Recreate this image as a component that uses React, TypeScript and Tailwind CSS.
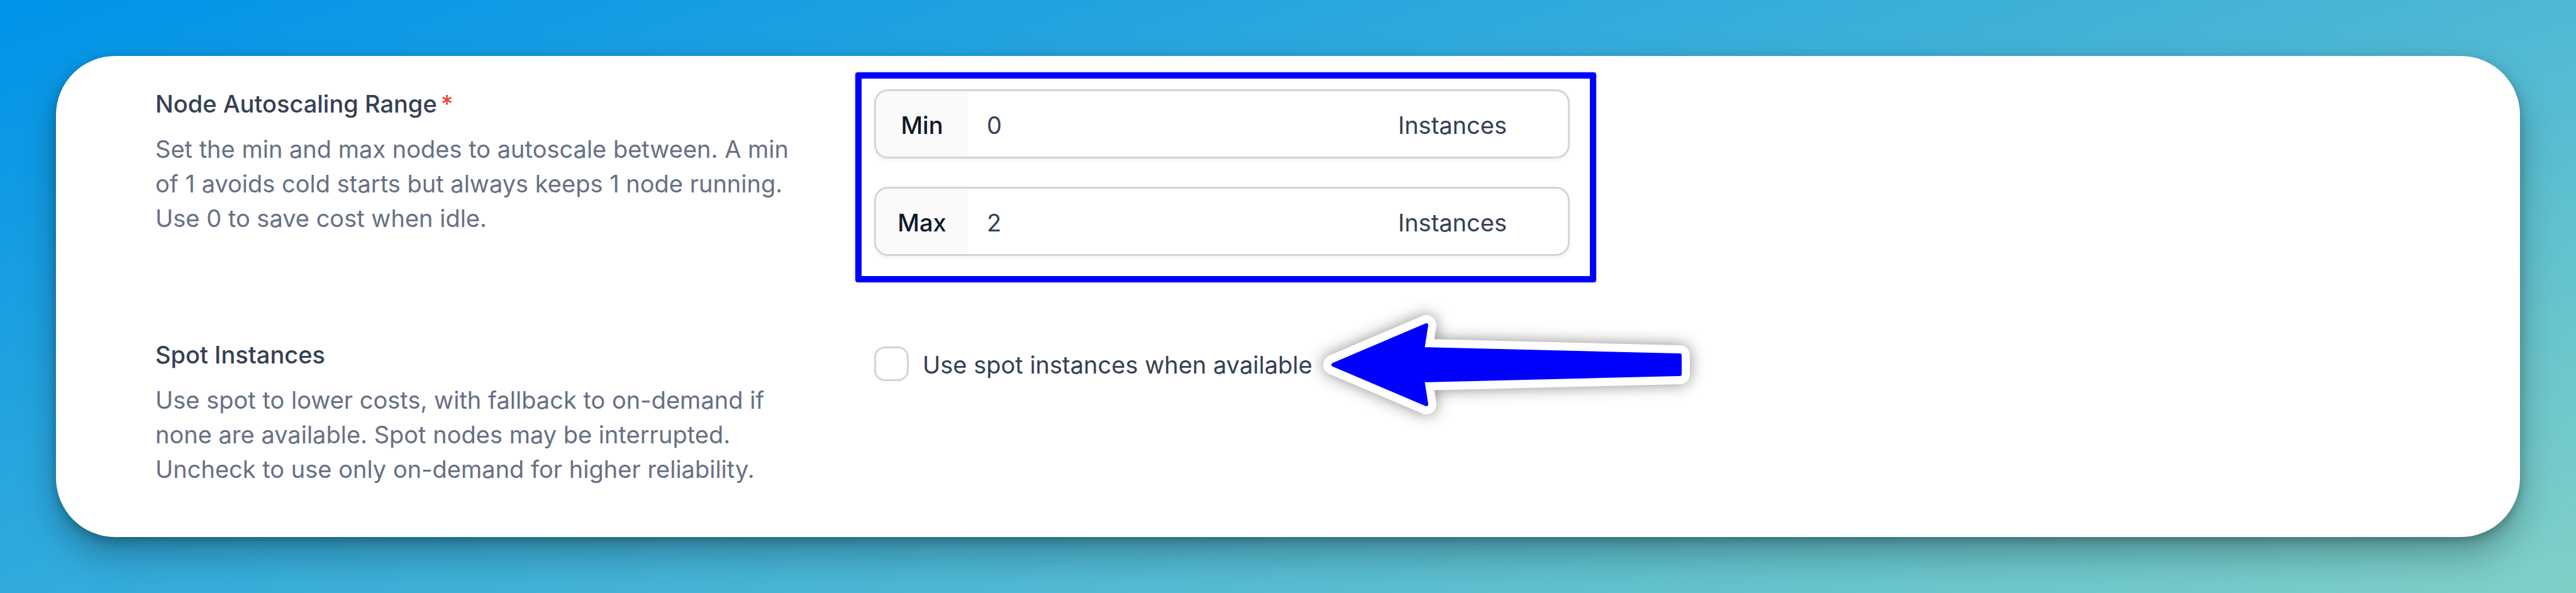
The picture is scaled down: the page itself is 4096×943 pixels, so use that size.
import { useState, type ReactNode } from "react";

type SettingProps = {
  title: string;
  required?: boolean;
  description: string;
  children: ReactNode;
};

function Setting({ title, required, description, children }: SettingProps) {
  return (
    <section className="grid grid-cols-[1023px_minmax(0,1fr)] gap-x-[120px]">
      <div>
        <h2 className="mb-[17px] font-medium text-[#344054]">
          {title}
          {required && <span className="ml-1.5 text-[#f04438]">*</span>}
        </h2>
        <p className="text-[#667085]">{description}</p>
      </div>
      <div>{children}</div>
    </section>
  );
}

type CountFieldProps = {
  id: string;
  label: string;
  value: string;
  onChange: (value: string) => void;
};

function CountField({ id, label, value, onChange }: CountFieldProps) {
  return (
    <div className="flex h-[110px] items-stretch overflow-hidden rounded-[22px] border-[3px] border-[#d0d5dd] bg-white shadow-[0_3px_6px_rgba(16,24,40,0.06)]">
      <label
        htmlFor={id}
        className="flex w-[146px] items-center justify-center bg-[#fafafa] pt-1 font-medium text-[#101828]"
      >
        {label}
      </label>
      <input
        id={id}
        type="text"
        inputMode="numeric"
        value={value}
        onChange={(event) => onChange(event.target.value)}
        className="min-w-0 flex-1 bg-transparent px-[30px] pt-1 text-[#344054] outline-none"
      />
      <span className="flex items-center pt-1 pr-[97px] text-[#344054]">Instances</span>
    </div>
  );
}

function Arrow() {
  return (
    <svg
      viewBox="0 0 640 200"
      aria-hidden="true"
      className="pointer-events-none absolute top-1/2 left-[688px] h-[200px] w-[640px] -translate-y-1/2 overflow-visible [filter:drop-shadow(0_0_12px_rgba(0,0,0,0.45))]"
    >
      <path
        d="M42 101 L190 38 L184 76 L593 86 V116 L184 126 L190 164 Z"
        fill="#fff"
        stroke="#fff"
        strokeWidth="32"
        strokeLinejoin="round"
      />
      <path
        d="M42 101 L190 38 L184 76 L593 86 V116 L184 126 L190 164 Z"
        fill="#00f"
        stroke="#00f"
        strokeWidth="6"
        strokeLinejoin="round"
      />
    </svg>
  );
}

export default function App() {
  const [min, setMin] = useState("0");
  const [max, setMax] = useState("2");
  const [spot, setSpot] = useState(false);

  return (
    <main className="flex min-h-screen flex-col bg-[linear-gradient(160deg,#0093e9_0%,#80d0c7_100%)] p-[89px] font-['Inter',sans-serif] text-[38px] leading-[55px]">
      <div className="flex flex-1 flex-col gap-[130px] rounded-[94px] bg-white pt-[49px] pr-[157px] pb-[79px] pl-[158px] shadow-[0_28px_56px_rgba(0,0,0,0.28),0_6px_16px_rgba(0,0,0,0.24)]">
        <Setting
          title="Node Autoscaling Range"
          required
          description="Set the min and max nodes to autoscale between. A min of 1 avoids cold starts but always keeps 1 node running. Use 0 to save cost when idle."
        >
          <div className="relative mt-1 flex max-w-[1106px] flex-col gap-[45px]">
            <CountField id="min-nodes" label="Min" value={min} onChange={setMin} />
            <CountField id="max-nodes" label="Max" value={max} onChange={setMax} />
            <div className="pointer-events-none absolute -top-[27px] -right-[42px] -bottom-[42px] -left-[30px] rounded-[4px] border-[10px] border-[#00f] shadow-[0_0_4px_rgba(0,0,0,0.25)]" />
          </div>
        </Setting>

        <Setting
          title="Spot Instances"
          description="Use spot to lower costs, with fallback to on-demand if none are available. Spot nodes may be interrupted. Uncheck to use only on-demand for higher reliability."
        >
          <label className="relative mt-3 inline-flex items-center gap-[22px] text-[#344054]">
            <input
              type="checkbox"
              checked={spot}
              onChange={(event) => setSpot(event.target.checked)}
              className="size-[55px] appearance-none rounded-[17px] border-[3px] border-[#d0d5dd] bg-white checked:border-[#00f] checked:bg-[#00f]"
            />
            <span className="pt-1">Use spot instances when available</span>
            <Arrow />
          </label>
        </Setting>
      </div>
    </main>
  );
}
